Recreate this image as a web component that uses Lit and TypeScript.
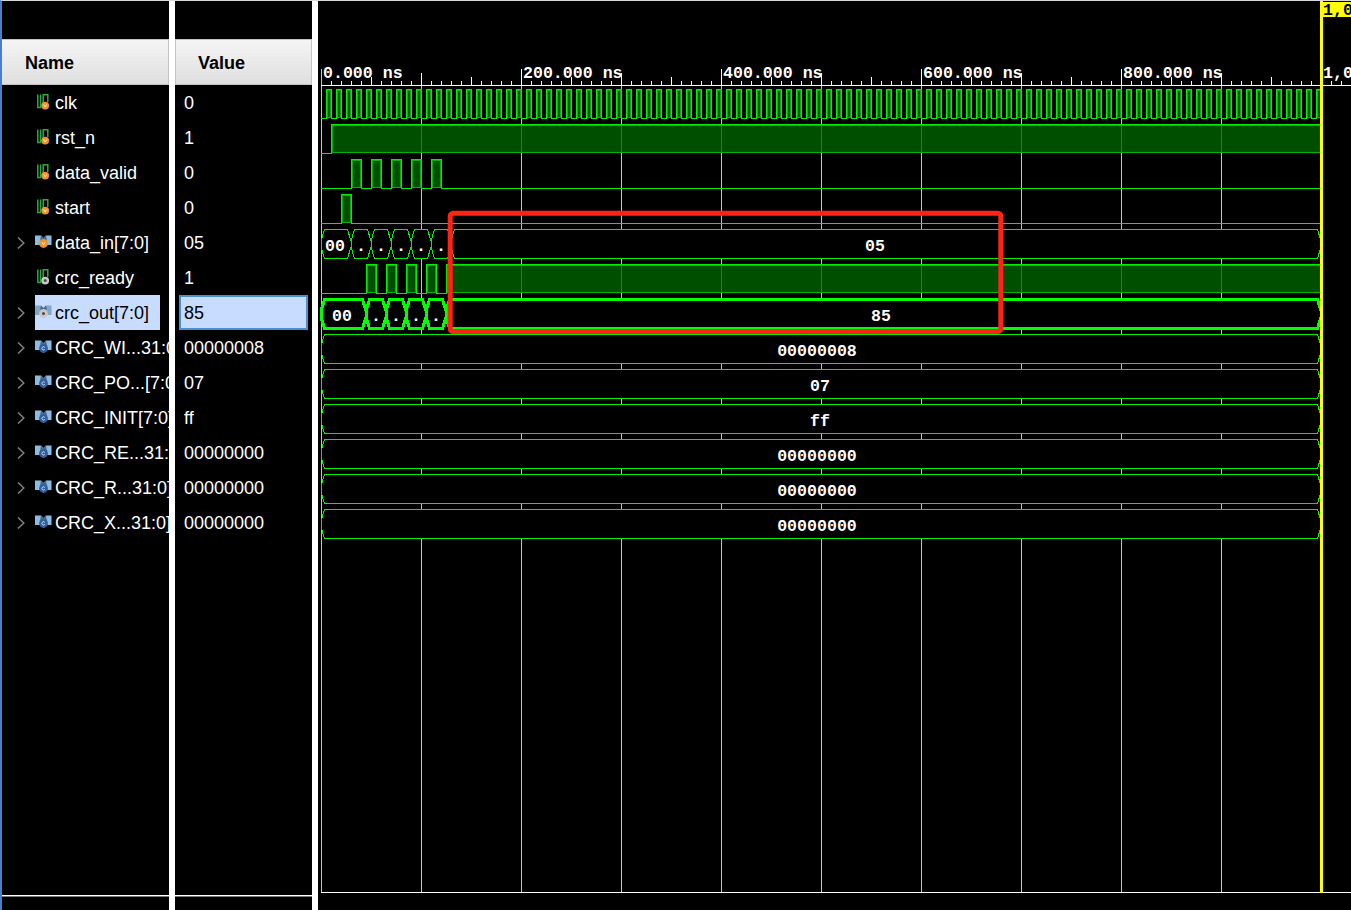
import { LitElement, html, css, svg } from "lit";
import { customElement } from "lit/decorators.js";

type Kind = "in" | "out" | "const";
interface Sig { name: string; value: string; bus: boolean; kind: Kind; selected?: boolean; }

const SIGNALS: Sig[] = [
  { name: "clk", value: "0", bus: false, kind: "in" },
  { name: "rst_n", value: "1", bus: false, kind: "in" },
  { name: "data_valid", value: "0", bus: false, kind: "in" },
  { name: "start", value: "0", bus: false, kind: "in" },
  { name: "data_in[7:0]", value: "05", bus: true, kind: "in" },
  { name: "crc_ready", value: "1", bus: false, kind: "out" },
  { name: "crc_out[7:0]", value: "85", bus: true, kind: "out", selected: true },
  { name: "CRC_WI...31:0]", value: "00000008", bus: true, kind: "const" },
  { name: "CRC_PO...[7:0]", value: "07", bus: true, kind: "const" },
  { name: "CRC_INIT[7:0]", value: "ff", bus: true, kind: "const" },
  { name: "CRC_RE...31:0]", value: "00000000", bus: true, kind: "const" },
  { name: "CRC_R...31:0]", value: "00000000", bus: true, kind: "const" },
  { name: "CRC_X...31:0]", value: "00000000", bus: true, kind: "const" },
];

const BADGE: Record<Kind, string> = { in: "#f0932b", out: "#c8c8c8", const: "#2f5f9e" };

function badge(kind: Kind, cx: number, cy: number, r: number) {
  const mark =
    kind === "in"
      ? svg`<path d="M${cx - 1.5} ${cy - 1.2} L${cx} ${cy + 1.5} L${cx + 1.5} ${cy - 1.2}" fill="none" stroke="#fff1c4" stroke-width="0.9"/>`
      : kind === "out"
        ? svg`<circle cx="${cx}" cy="${cy}" r="1.5" fill="#4a4a4a"/>`
        : svg`<path d="M${cx + 1.3} ${cy - 1} A1.6 1.6 0 1 0 ${cx + 1.3} ${cy + 1}" fill="none" stroke="#dfe8ff" stroke-width="0.9"/>`;
  return svg`<circle cx="${cx}" cy="${cy}" r="${r}" fill="${BADGE[kind]}"/>${mark}`;
}

function icon(s: Sig) {
  if (s.bus) {
    return html`<svg class="icon" viewBox="0 0 17 16" width="17" height="16">
      <path d="M0 1.5 L6 1.5 L8.5 4 L11 1.5 L16.5 1.5 V11 L12 11 L8.5 14 L5 11 L0 11 Z" fill="${s.selected ? "#7fa8c8" : "#8cbce2"}"/>
      <path d="M6 1.5 L8.5 4 L11 1.5 L12 7 L5 7 Z" fill="#4a6a84"/>
      ${badge(s.kind, 8.5, 9.4, 4.4)}
    </svg>`;
  }
  return html`<svg class="icon logic" viewBox="0 0 13 16" width="13" height="16">
    <path d="M0.8 0.5 V13.4 H3.6 V0.5 M6.2 11 V0.8 H10.8 V8" fill="none" stroke="#2fa840" stroke-width="1.5"/>
    ${badge(s.kind, 8.2, 11.6, 3.9)}
  </svg>`;
}

const rowTop = (i: number) => 89 + 35 * i;
const ROW_H = 29;

function digital(i: number, rises: [number, number][]) {
  const top = rowTop(i) + 0.5;
  const low = top + ROW_H;
  let d = `M321 ${low}`;
  for (const [a, b] of rises) d += ` H${a + 0.5} V${top} H${b + 0.5} V${low}`;
  d += ` H1321`;
  return svg`
    ${rises.map(([a, b]) => svg`<rect class="hi" x="${a + 1.5}" y="${top + 1}" width="${b - a - 2}" height="${ROW_H - 2}"></rect>`)}
    <path class="edge" d="${d}"></path>`;
}

function bus(i: number, edges: number[], labels: [string, number][], thick = false) {
  const top = rowTop(i) + 0.5;
  const bot = top + ROW_H;
  const mid = top + ROW_H / 2;
  const parts = [];
  for (let k = 0; k < edges.length - 1; k++) {
    const a = edges[k], b = edges[k + 1];
    parts.push(svg`<path class="${thick ? "bus thick" : "bus"}"
      d="M${a} ${mid - 3} L${a + 3.5} ${top} H${b - 3.5} L${b} ${mid - 3} V${mid + 3} L${b - 3.5} ${bot} H${a + 3.5} L${a} ${mid + 3} Z"></path>`);
  }
  return svg`${parts}${labels.map(([t, x]) => svg`<text class="val" x="${x}" y="${bot - 8}" text-anchor="middle">${t}</text>`)}`;
}

function range(a: number, b: number, step: number) {
  const r: number[] = [];
  for (let x = a; x <= b; x += step) r.push(x);
  return r;
}

@customElement("wave-view")
export class WaveView extends LitElement {
  static styles = css`
    :host { display: block; flex: 1; min-width: 0; background: #000; }
    svg { display: block; }
    .grid { fill: #c4c4c4; }
    .rule { fill: #fff; }
    .time { font: bold 16.6px "Liberation Mono", monospace; fill: #fff; }
    .mk { font: bold 16.6px "Liberation Mono", monospace; fill: #000; }
    .val { font: bold 16.6px "Liberation Mono", monospace; fill: #fff; }
    .hi { fill: #006400; fill-opacity: 0.78; stroke: #00b400; stroke-width: 1; shape-rendering: crispEdges; }
    .edge { fill: none; stroke: #00f000; stroke-width: 1; shape-rendering: crispEdges; }
    .bus { fill: #000; stroke: #00f000; stroke-width: 1; shape-rendering: crispEdges; }
    .thick { stroke: #00ff00; stroke-width: 3; }
    .redbox { fill: none; stroke: #ff2414; stroke-width: 5; }
    .marker { fill: #ffff00; }
  `;

  render() {
    const clk = range(326, 1316, 10).map((x) => [x, x + 5] as [number, number]);
    const valid = [351, 371, 391, 411, 431].map((x) => [x, x + 10] as [number, number]);
    const ready = [366, 386, 406, 426].map((x) => [x, x + 10] as [number, number]);
    const dots = (xs: number[]) => xs.map((x) => [".", x] as [string, number]);
    return html`<svg width="1033" height="909" viewBox="318 1 1033 909">
      ${range(421, 1221, 100).map((x) => svg`<rect class="grid" x="${x}" y="85" width="1" height="807"></rect>`)}
      <rect class="grid" x="321" y="69" width="1" height="823"></rect>
      <rect class="rule" x="321" y="892" width="1030" height="1"></rect>
      <rect class="rule" x="321" y="85" width="1030" height="1"></rect>
      ${range(331, 1341, 10).map((x) => {
        const off = x - 321;
        const y = off % 200 === 0 ? 69 : off % 100 === 0 ? 73 : off % 50 === 0 ? 77 : 81;
        return svg`<rect class="rule" x="${x}" y="${y}" width="1" height="${85 - y}"></rect>`;
      })}
      ${["0.000 ns", "200.000 ns", "400.000 ns", "600.000 ns", "800.000 ns"].map((t, i) =>
        svg`<text class="time" x="${323 + 200 * i}" y="78">${t}</text>`)}
      <text class="time" x="1323" y="78">1,0</text>

      ${digital(0, clk)}
      ${digital(1, [[331, 1321]])}
      ${digital(2, valid)}
      ${digital(3, [[341, 351]])}
      ${bus(4, [321, 351, 371, 391, 411, 431, 451, 1321], [["00", 335], ...dots([361, 381, 401, 421, 441]), ["05", 875]])}
      ${digital(5, [...ready, [446, 1321]])}
      ${bus(6, [321, 366, 386, 406, 426, 446, 1321], [["00", 342], ...dots([376, 396, 416, 436]), ["85", 881]], true)}
      ${bus(7, [321, 1321], [["00000008", 817]])}
      ${bus(8, [321, 1321], [["07", 820]])}
      ${bus(9, [321, 1321], [["ff", 820]])}
      ${bus(10, [321, 1321], [["00000000", 817]])}
      ${bus(11, [321, 1321], [["00000000", 817]])}
      ${bus(12, [321, 1321], [["00000000", 817]])}

      <rect class="redbox" x="450.2" y="213.2" width="550.6" height="118.3" rx="3"></rect>
      <rect class="marker" x="1320" y="1" width="3" height="892"></rect>
      <rect class="marker" x="1320" y="2" width="31" height="15"></rect>
      <text class="mk" x="1323" y="15">1,0</text>
    </svg>`;
  }
}

@customElement("app-root")
export class AppRoot extends LitElement {
  static styles = css`
    :host { display: block; width: 1351px; height: 910px; background: #fff; overflow: hidden; }
    .app {
      display: flex; height: 910px; box-sizing: border-box;
      border-top: 1px solid #d8d8d8; border-left: 2px solid #4a7fc8;
      font: 18px "Liberation Sans", Arial, sans-serif; color: #fff;
    }
    .col { display: flex; flex-direction: column; background: #000; overflow: hidden; margin-right: 6px; }
    .col.name { width: 167px; }
    .col.value { width: 137px; }
    .spacer { height: 38px; flex: none; }
    .head {
      height: 46px; flex: none; box-sizing: border-box; display: flex; align-items: center;
      padding-top: 2px;
      font-weight: bold; color: #000;
      background: linear-gradient(#f5f5f5, #dfdfdf);
      border: 1px solid #c4c4c4; border-width: 1px 1px 1px 0;
    }
    .name .head { padding-left: 23px; }
    .value .head { padding-left: 22px; border-left-width: 1px; }
    .rows { flex: 1; min-height: 0; }
    .row { height: 35px; display: flex; align-items: center; white-space: nowrap; }
    .chev { width: 33px; flex: none; display: flex; justify-content: center; padding: 1px 0 0 4px; box-sizing: border-box; }
    .nm { display: flex; align-items: center; height: 35px; padding-right: 10px; }
    .nm.sel { background: #c8dcff; color: #000; width: 125px; padding-right: 0; flex: none; }
    .label { padding-top: 2px; }
    .iconbox { width: 20px; flex: none; display: flex; }
    .icon { display: block; margin-top: -1px; }
    .logic { margin-left: 2px; }
    .v { padding: 2px 0 0 9px; }
    .v.sel {
      margin-left: 4px; width: 129px; height: 35px; box-sizing: border-box; padding: 2px 0 0 3px;
      display: flex; align-items: center;
      background: #c8dcff; color: #000; border: 2px solid #4a90d0;
    }
    .foot { height: 15px; flex: none; box-sizing: border-box; border-top: 1px solid #fff; box-shadow: inset 0 1px #777; }
  `;

  render() {
    return html`<div class="app">
      <div class="col name">
        <div class="spacer"></div>
        <div class="head">Name</div>
        <div class="rows">
          ${SIGNALS.map((s) => html`<div class="row">
            <div class="chev">${s.bus
              ? html`<svg width="8" height="12" viewBox="0 0 8 12"><path d="M1 0.5 L6.8 6 L1 11.5" fill="none" stroke="#808080" stroke-width="1.5"/></svg>`
              : ""}</div>
            <div class="nm ${s.selected ? "sel" : ""}">
              <div class="iconbox">${icon(s)}</div><span class="label">${s.name}</span>
            </div>
          </div>`)}
        </div>
        <div class="foot"></div>
      </div>
      <div class="col value">
        <div class="spacer"></div>
        <div class="head">Value</div>
        <div class="rows">
          ${SIGNALS.map((s) => html`<div class="row"><div class="v ${s.selected ? "sel" : ""}">${s.value}</div></div>`)}
        </div>
        <div class="foot"></div>
      </div>
      <wave-view></wave-view>
    </div>`;
  }
}
